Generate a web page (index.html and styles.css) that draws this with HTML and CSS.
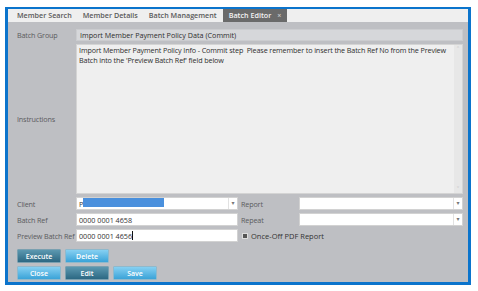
FILE: index.html
```html
<!DOCTYPE html>
<html lang="en">
<head>
  <meta charset="UTF-8" />
  <title>Batch Editor</title>
  <link rel="stylesheet" href="styles.css">
</head>
<body>
  <div class="frame">
    <div class="tabs">
      <div class="tab">Member Search</div>
      <div class="tab">Member Details</div>
      <div class="tab">Batch Management</div>
      <div class="tab active">Batch Editor <span class="close">&times;</span></div>
    </div>

    <div class="form">
      <div class="label">Batch Group</div>
      <div class="field readonly wide">Import Member Payment Policy Data (Commit)</div>

      <div class="label">Instructions</div>
      <div class="memo wide">
        <div class="memo-text">Import Member Payment Policy Info - Commit step&nbsp; Please remember to insert the Batch Ref No from the Preview Batch into the 'Preview Batch Ref' field below</div>
        <div class="scroll"><span>&#708;</span><span>&#709;</span></div>
      </div>

      <div class="label">Client</div>
      <div class="field select"><span class="val">P<span class="mask"></span></span><span class="arrow">&#9662;</span></div>
      <div class="label side">Report</div>
      <div class="field select"><span class="val"></span><span class="arrow">&#9662;</span></div>

      <div class="label">Batch Ref</div>
      <div class="field">0000 0001 4658</div>
      <div class="label side">Repeat</div>
      <div class="field select"><span class="val"></span><span class="arrow">&#9662;</span></div>

      <div class="label">Preview Batch Ref</div>
      <div class="field">0000 0001 4656<span class="caret"></span></div>
      <div class="check wide2"><span class="box"></span>Once-Off PDF Report</div>
    </div>

    <div class="buttons">
      <div class="row">
        <button class="btn dark">Execute</button>
        <button class="btn">Delete</button>
      </div>
      <div class="row">
        <button class="btn">Close</button>
        <button class="btn dark">Edit</button>
        <button class="btn">Save</button>
      </div>
    </div>
  </div>
</body>
</html>
```

FILE: styles.css
```css
body {
  margin: 0;
  padding: 7px 0 0 5px;
  background: #ffffff;
  font-family: "Open Sans", "DejaVu Sans", sans-serif;
  font-size: 7.2px;
}
.frame {
  width: 466px;
  height: 278px;
  box-sizing: border-box;
  border: 3px solid #0b74cc;
  border-top-width: 2px;
  background: #bebfc3;
}
.tabs {
  display: flex;
  height: 13px;
  background: #efefef;
  padding-left: 9px;
}
.tab {
  font-weight: 600;
  color: #5a5a5a;
  line-height: 13px;
  margin-right: 11px;
}
.tab.active {
  background: #6a6a6a;
  color: #f4f4f4;
  padding: 0 6px 0 6px;
  margin-left: -5px;
}
.tab .close {
  margin-left: 4px;
  color: #c8c8c8;
}
.form {
  display: grid;
  grid-template-columns: 68px 162px 61px 1fr;
  grid-template-rows: 12px 150px 13px 13px 13px;
  row-gap: 3px;
  padding: 7px 5px 0 0;
}
.label {
  color: #5b5b5e;
  padding-left: 9px;
  align-self: center;
  white-space: nowrap;
  letter-spacing: -0.15px;
}
.label.side {
  padding-left: 3px;
}
.field {
  background: #ffffff;
  border: 1px solid #d2d2d2;
  color: #333;
  padding-left: 2px;
  white-space: nowrap;
  overflow: hidden;
  display: flex;
  align-items: center;
}
.wide {
  grid-column: 2 / 5;
}
.field.readonly {
  background: #d6d7da;
  border-color: #cbcccf;
  color: #2e2e2e;
  padding-left: 3px;
}
.memo {
  background: #efefef;
  border: 1px solid #d4d4d4;
  display: flex;
}
.memo-text {
  flex: 1;
  color: #2e2e2e;
  padding: 1px 2px;
  line-height: 9.5px;
  letter-spacing: -0.12px;
}
.scroll {
  width: 8px;
  background: #e7e7e7;
  display: flex;
  flex-direction: column;
  justify-content: space-between;
  align-items: center;
  color: #c4c4c4;
  font-size: 6px;
}
.select {
  justify-content: space-between;
  padding-right: 0;
}
.select .val {
  display: flex;
  align-items: center;
}
.select .arrow {
  width: 8px;
  height: 11px;
  line-height: 11px;
  border-left: 1px solid #e2e2e2;
  color: #777;
  font-size: 6px;
  text-align: center;
}
.mask {
  display: inline-block;
  width: 81px;
  height: 9px;
  background: #4a90dd;
  margin-top: -3px;
}
.caret {
  display: inline-block;
  width: 1px;
  height: 9px;
  background: #111;
}
.wide2 {
  grid-column: 3 / 5;
}
.check {
  display: flex;
  align-items: center;
  color: #333;
  padding-left: 4px;
  font-size: 7.5px;
}
.check .box {
  width: 4px;
  height: 4px;
  background: #555;
  border: 1px solid #ddd;
  margin-right: 3px;
}
.buttons {
  padding: 7px 0 0 9px;
  display: flex;
  flex-direction: column;
  gap: 3px;
}
.row {
  display: flex;
  gap: 4px;
}
.btn {
  width: 44px;
  height: 14px;
  padding: 0;
  border: 1px solid #8fb9cc;
  border-radius: 1px;
  background: linear-gradient(#86d0f2, #3aa3d8);
  color: #ffffff;
  font-family: "Open Sans", sans-serif;
  font-weight: 600;
  font-size: 7px;
  cursor: pointer;
}
.btn.dark {
  background: linear-gradient(#5c98b0, #2c6883);
  border-color: #7aa0b0;
}
```
